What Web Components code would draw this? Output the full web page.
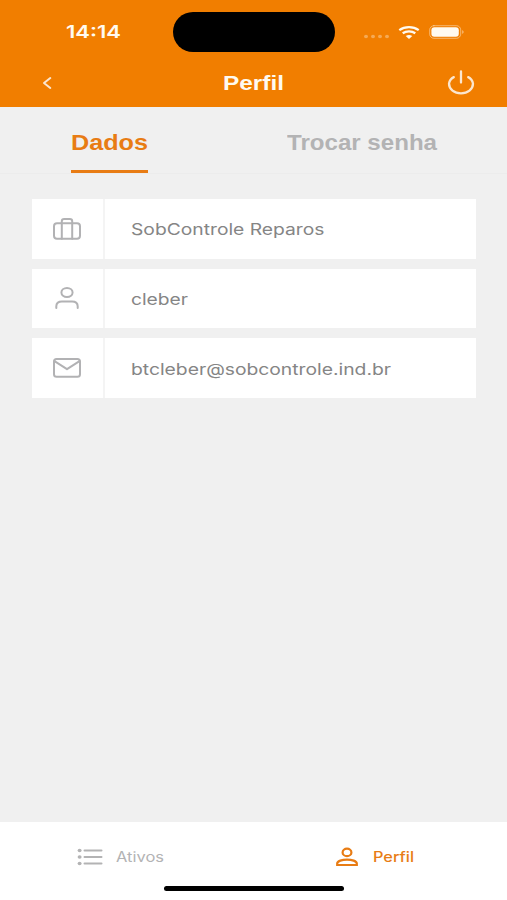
<!DOCTYPE html>
<html lang="pt-BR">
<head>
<meta charset="utf-8">
<meta name="viewport" content="width=device-width, initial-scale=1">
<title>Perfil</title>
<style>
  :root {
    --clr-brand: #f17e00;
    --clr-accent: #e87c14;
    --clr-bg: #f0f0f0;
    --clr-mut: #b3b3b4;
    --clr-text: #858585;
    --font-sans: 'Inter', 'Liberation Sans', sans-serif;
    --font-title: 'Liberation Sans', Arial, sans-serif;
  }
  body { margin: 0; background: var(--clr-bg); font-family: var(--font-sans); }
</style>
</head>
<body>
<sc-app></sc-app>

<script>
'use strict';

// ── Ícones ───────────────────────────────────────────────────────────────────
const ICONS = {
  back: '<svg width="10" height="14" viewBox="0 0 10 14"><path d="M8.300 2 2 7l6.300 5" stroke-width="2"/></svg>',
  power: '<svg width="28" height="26" viewBox="0 0 28 26"><path d="M14 1.500v11M6.800 7.100A9 9 0 0 0 2 13.600C2 19.400 7.400 23.400 14 23.400s12-4 12-9.800a9 9 0 0 0-4.800-6.500" stroke-width="2.300"/></svg>',
  briefcase: '<svg width="30" height="24" viewBox="0 0 30 24"><rect x="2" y="6.200" width="26" height="15.600" rx="3"/><path d="M9.800 21.800V4.200q0-2.200 2.400-2.200h5.600q2.400 0 2.400 2.200v17.600"/></svg>',
  user: '<svg width="26" height="24" viewBox="0 0 26 24"><ellipse cx="13" cy="6.500" rx="5.600" ry="4.400"/><path d="M2.300 22v-1.700q0-4.900 5.700-4.900h10q5.700 0 5.700 4.900V22"/></svg>',
  mail: '<svg width="30" height="22" viewBox="0 0 30 22"><rect x="2" y="2" width="26" height="17.800" rx="2.600"/><path d="m2.500 4.200 12.500 8 12.500-8"/></svg>',
  list: '<svg width="26" height="18" viewBox="0 0 26 18"><path d="M7.500 2.500h17M7.500 9h17M7.500 15.500h17" stroke-width="2"/><g fill="currentColor" stroke="none"><ellipse cx="2.600" cy="2.500" rx="2" ry="1.700"/><ellipse cx="2.600" cy="9" rx="2" ry="1.700"/><ellipse cx="2.600" cy="15.500" rx="2" ry="1.700"/></g></svg>',
  person: '<svg width="24" height="20" viewBox="0 0 24 20"><g stroke-width="2.200" stroke-linejoin="miter"><ellipse cx="12" cy="5.400" rx="4.400" ry="3.700"/><path d="M2.200 18v-1.500c0-2.500 5-3.900 9.800-3.900s9.800 1.400 9.800 3.900V18z"/></g></svg>',
  wifi: '<svg width="22" height="15" viewBox="0 0 22 15"><g stroke-linecap="butt" stroke-width="2.300"><path d="M1.300 5.100a14.500 11.500 0 0 1 19.400 0M4.700 8.300a9.500 7.500 0 0 1 12.600 0"/></g><path d="M11 13.900 7.700 11.100q3.300-2.300 6.600 0z" fill="currentColor" stroke="none"/></svg>',
  battery: '<svg width="36" height="14" viewBox="0 0 36 14"><rect x=".7" y=".7" width="31" height="12.600" rx="4.200" stroke-width="1" opacity=".45"/><rect x="2.400" y="2.200" width="27.400" height="9.600" rx="3" fill="currentColor" stroke="none"/><path d="M33.200 4.900q3 2.100 0 4.200z" fill="currentColor" stroke="none" opacity=".5"/></svg>',
  signal: '<svg width="28" height="5" viewBox="0 0 28 5"><g fill="currentColor" stroke="none" opacity=".35"><ellipse cx="3" cy="2.500" rx="2" ry="1.700"/><ellipse cx="10" cy="2.500" rx="2" ry="1.700"/><ellipse cx="17" cy="2.500" rx="2" ry="1.700"/><ellipse cx="24" cy="2.500" rx="2" ry="1.700"/></g></svg>'
};

// <sc-icon name="...">: herda a cor via currentColor
class ScIcon extends HTMLElement {
  constructor() {
    super();
    this.attachShadow({ mode: 'open' });
  }
  connectedCallback() {
    this.shadowRoot.innerHTML = `<style>
      :host { display: inline-flex; flex: none; }
      svg { display: block; fill: none; stroke: currentColor; stroke-width: 2;
            stroke-linecap: round; stroke-linejoin: round; }
    </style>${ICONS[this.getAttribute('name')] || ''}`;
  }
}

class ScWide extends HTMLElement {
  constructor() {
    super();
    this.attachShadow({ mode: 'open' }).innerHTML = `<style>
      :host { display: inline-block; flex: none; white-space: nowrap; }
      span { display: inline-block; transform-origin: 0 50%; }
    </style><span><slot></slot></span>`;
  }
  connectedCallback() {
    const width = parseFloat(this.getAttribute('width'));
    const span = this.shadowRoot.querySelector('span');
    const natural = span.getBoundingClientRect().width;
    if (!width || !natural) return;
    span.style.transform = `scaleX(${width / natural})`;
    this.style.width = `${width}px`;
  }
}

class ScStatusBar extends HTMLElement {
  constructor() {
    super();
    this.attachShadow({ mode: 'open' }).innerHTML = `<style>
      :host { display: grid; grid-template-columns: 173px 162px 1fr; height: 40px;
              padding-top: 12px; color: #fffaf0; }
      .time { padding: 9px 0 0 66px; font-size: 17.5px; line-height: 22px; font-weight: 600; }
      .island { background: #000; border-radius: 20px; height: 40px; }
      .icons { display: flex; align-items: center; padding-left: 28px; }
      .signal { margin: 9px 7px 0 0; }
      .wifi { margin-right: 9px; }
    </style>
    <div class="time"><sc-wide width="55">14:14</sc-wide></div>
    <div class="island"></div>
    <div class="icons">
      <sc-icon class="signal" name="signal"></sc-icon>
      <sc-icon class="wifi" name="wifi"></sc-icon>
      <sc-icon name="battery"></sc-icon>
    </div>`;
  }
}

class ScHeader extends HTMLElement {
  constructor() {
    super();
    this.attachShadow({ mode: 'open' }).innerHTML = `<style>
      :host { display: block; height: 106.5px; background: var(--clr-brand); color: #fffaf0; }
      .bar { display: grid; grid-template-columns: 1fr auto 1fr; align-items: center;
             height: 54px; padding: 8px 32px 0 42px; box-sizing: border-box; }
      .title { font: 700 21px/26px var(--font-title); margin-right: 11px; }
      .back, .power { display: flex; color: #fbe6cf; }
      .power { justify-content: flex-end; }
    </style>
    <sc-status-bar></sc-status-bar>
    <div class="bar">
      <div class="back"><sc-icon name="back"></sc-icon></div>
      <div class="title"><slot></slot></div>
      <div class="power"><sc-icon name="power"></sc-icon></div>
    </div>`;
  }
}

class ScTab extends HTMLElement {
  constructor() {
    super();
    this.attachShadow({ mode: 'open' }).innerHTML = `<style>
      :host { display: flex; justify-content: center; color: var(--clr-mut);
              font: 700 21.5px/26px var(--font-title); }
      .tab { box-sizing: border-box; height: 66.5px; padding-top: 23.5px; border-bottom: 3px solid transparent; }
      :host([active]) { color: var(--clr-accent); }
      :host([active]) .tab { border-color: currentColor; }
    </style><div class="tab"><slot></slot></div>`;
  }
}

class ScTabs extends HTMLElement {
  constructor() {
    super();
    this.attachShadow({ mode: 'open' }).innerHTML = `<style>
      :host { display: grid; grid-template-columns: 218px 288px; height: 66.5px;
              border-bottom: 1px solid #ececec; }
    </style><slot></slot>`;
  }
}

class ScField extends HTMLElement {
  constructor() {
    super();
    this.attachShadow({ mode: 'open' });
  }
  connectedCallback() {
    this.shadowRoot.innerHTML = `<style>
      :host { display: grid; grid-template-columns: 73px 1fr; height: 59.5px; background: #fff;
              color: var(--clr-text); font-size: 16px; line-height: 20px; }
      .icon { display: flex; align-items: center; justify-content: center; color: #b2b2b4;
              padding-right: 1px; border-right: 2px solid #f4f4f4; }
      .value { display: flex; align-items: center; padding: 1px 0 0 26px; }
    </style>
    <div class="icon"><sc-icon name="${this.getAttribute('icon')}"></sc-icon></div>
    <div class="value"><slot></slot></div>`;
  }
}

class ScNavItem extends HTMLElement {
  constructor() {
    super();
    this.attachShadow({ mode: 'open' });
  }
  connectedCallback() {
    this.shadowRoot.innerHTML = `<style>
      :host { display: flex; align-items: center; gap: 13px; color: var(--clr-mut);
              font-size: 14px; line-height: 18px; }
      :host([active]) { color: var(--clr-accent); font-weight: 500; gap: 14px; }
    </style>
    <sc-icon name="${this.getAttribute('icon')}"></sc-icon><slot></slot>`;
  }
}

class ScNav extends HTMLElement {
  constructor() {
    super();
    this.attachShadow({ mode: 'open' }).innerHTML = `<style>
      :host { display: flex; flex-direction: column; height: 78px; background: #fff; }
      .items { display: grid; grid-template-columns: 258px 1fr; height: 64px; padding: 6px 0 0 77px;
               box-sizing: border-box; }
      .home { width: 180px; height: 5px; border-radius: 3px; background: #000; margin-left: 164px; }
    </style>
    <div class="items"><slot></slot></div>
    <div class="home"></div>`;
  }
}

class ScApp extends HTMLElement {
  constructor() {
    super();
    this.attachShadow({ mode: 'open' }).innerHTML = `<style>
      :host { display: flex; flex-direction: column; width: 507px; height: 900px;
              background: var(--clr-bg); overflow: hidden; }
      main { flex: 1; display: flex; flex-direction: column; gap: 10.2px; padding: 25px 31px 0 32px; }
    </style>
    <sc-header><sc-wide width="61">Perfil</sc-wide></sc-header>
    <sc-tabs>
      <sc-tab active><sc-wide width="77">Dados</sc-wide></sc-tab>
      <sc-tab><sc-wide width="150">Trocar senha</sc-wide></sc-tab>
    </sc-tabs>
    <main>
      <sc-field icon="briefcase"><sc-wide width="193.5">SobControle Reparos</sc-wide></sc-field>
      <sc-field icon="user"><sc-wide width="57">cleber</sc-wide></sc-field>
      <sc-field icon="mail"><sc-wide width="260">btcleber@sobcontrole.ind.br</sc-wide></sc-field>
    </main>
    <sc-nav>
      <sc-nav-item icon="list"><sc-wide width="48">Ativos</sc-wide></sc-nav-item>
      <sc-nav-item icon="person" active><sc-wide width="41">Perfil</sc-wide></sc-nav-item>
    </sc-nav>`;
  }
}

// sc-wide mede o texto ao conectar, por isso os contêineres são definidos antes
customElements.define('sc-app', ScApp);
customElements.define('sc-header', ScHeader);
customElements.define('sc-status-bar', ScStatusBar);
customElements.define('sc-tabs', ScTabs);
customElements.define('sc-tab', ScTab);
customElements.define('sc-field', ScField);
customElements.define('sc-nav', ScNav);
customElements.define('sc-nav-item', ScNavItem);
customElements.define('sc-icon', ScIcon);
customElements.define('sc-wide', ScWide);
</script>
</body>
</html>
